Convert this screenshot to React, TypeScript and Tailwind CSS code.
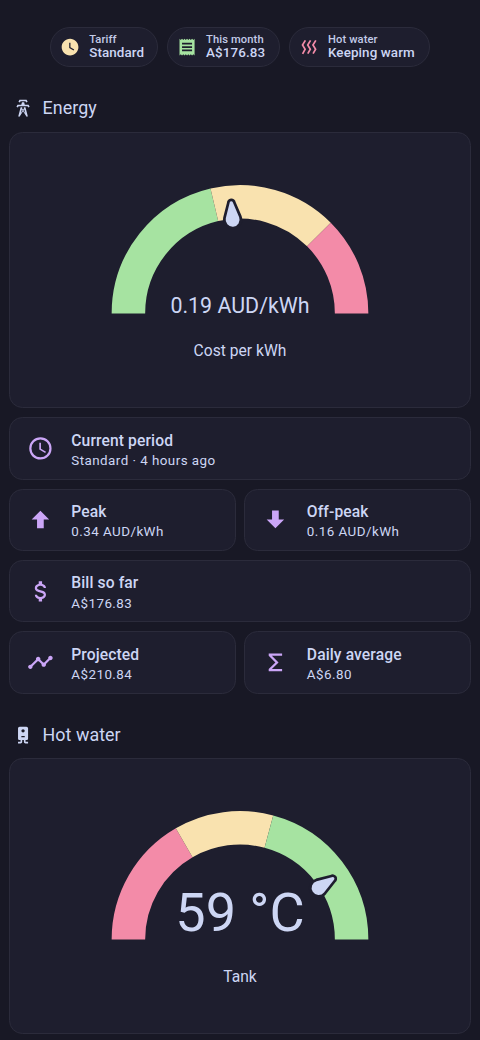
import type { ReactNode } from "react";

const ICONS = {
  clock:
    "M12 2C6.5 2 2 6.5 2 12C2 17.5 6.5 22 12 22C17.5 22 22 17.5 22 12S17.5 2 12 2M16.2 16.2L11 13V7H12.5V12.2L17 14.9L16.2 16.2Z",
  clockOutline:
    "M12,20A8,8 0 0,0 20,12A8,8 0 0,0 12,4A8,8 0 0,0 4,12A8,8 0 0,0 12,20M12,2A10,10 0 0,1 22,12A10,10 0 0,1 12,22C6.47,22 2,17.5 2,12A10,10 0 0,1 12,2M12.5,7V12.25L17,14.92L16.25,16.15L11,13V7H12.5Z",
  receipt:
    "M3,22L4.5,20.5L6,22L7.5,20.5L9,22L10.5,20.5L12,22L13.5,20.5L15,22L16.5,20.5L18,22L19.5,20.5L21,22V2L19.5,3.5L18,2L16.5,3.5L15,2L13.5,3.5L12,2L10.5,3.5L9,2L7.5,3.5L6,2L4.5,3.5L3,2M18,9H6V7H18M18,13H6V11H18M18,17H6V15H18V17Z",
  heat:
    "M8.5 4.5L5.4 9.5L8.5 14.7L5.2 20.5L3.4 19.6L6.1 14.7L3 9.5L6.7 3.6L8.5 4.5M14.7 4.4L11.6 9.5L14.7 14.5L11.4 20.3L9.6 19.4L12.3 14.5L9.2 9.5L12.9 3.5L14.7 4.4M21 4.4L17.9 9.5L21 14.5L17.7 20.3L15.9 19.4L18.6 14.5L15.5 9.5L19.2 3.5L21 4.4",
  tower:
    "M8.28,5.45L6.5,4.55L7.76,2H16.23L17.5,4.55L15.72,5.44L15,4H9L8.28,5.45M18.62,8H14.09L13.3,5H10.7L9.91,8H5.38L4.1,10.55L5.89,11.44L6.62,10H17.38L18.1,11.45L19.89,10.56L18.62,8M17.77,22H15.7L15.46,21.1L12,15.9L8.53,21.1L8.3,22H6.23L9.12,11H11.19L10.83,12.35L12,14.1L13.16,12.35L12.81,11H14.88L17.77,22M11.4,15L10.5,13.65L9.32,18.13L11.4,15M14.68,18.12L13.5,13.64L12.6,15L14.68,18.12Z",
  boiler:
    "M8 2C6.89 2 6 2.89 6 4V16C6 17.11 6.89 18 8 18H9V20H6V22H9C10.11 22 11 21.11 11 20V18H13V20C13 21.11 13.89 22 15 22H18V20H15V18H16C17.11 18 18 17.11 18 16V4C18 2.89 17.11 2 16 2H8M12 4.97A2 2 0 0 1 14 6.97A2 2 0 0 1 12 8.97A2 2 0 0 1 10 6.97A2 2 0 0 1 12 4.97M10 14.5V13H14V14.5H10Z",
  up: "M15,20H9V12H4.16L12,4.16L19.84,12H15V20Z",
  down: "M9,4H15V12H19.84L12,19.84L4.16,12H9V4Z",
  dollar:
    "M7,15H9C9,16.08 10.37,17 12,17C13.63,17 15,16.08 15,15C15,13.9 13.96,13.5 11.76,12.97C9.64,12.44 7,11.78 7,9C7,7.21 8.47,5.69 10.5,5.18V3H13.5V5.18C15.53,5.69 17,7.21 17,9H15C15,7.92 13.63,7 12,7C10.37,7 9,7.92 9,9C9,10.1 10.04,10.5 12.24,11.03C14.36,11.56 17,12.22 17,15C17,16.79 15.53,18.31 13.5,18.82V21H10.5V18.82C8.47,18.31 7,16.79 7,15Z",
  timeline:
    "M23,8C23,9.1 22.1,10 21,10C20.82,10 20.65,9.97 20.49,9.93L16.93,13.48C16.97,13.64 17,13.82 17,14C17,15.1 16.1,16 15,16C13.9,16 13,15.1 13,14C13,13.82 13.03,13.64 13.07,13.48L10.52,10.93C10.36,10.97 10.18,11 10,11C9.82,11 9.64,10.97 9.48,10.93L4.93,15.49C4.97,15.65 5,15.82 5,16C5,17.1 4.1,18 3,18C1.9,18 1,17.1 1,16C1,14.9 1.9,14 3,14C3.18,14 3.35,14.03 3.51,14.07L8.07,9.52C8.03,9.36 8,9.18 8,9C8,7.9 8.9,7 10,7C11.1,7 12,7.9 12,9C12,9.18 11.97,9.36 11.93,9.52L14.48,12.07C14.64,12.03 14.82,12 15,12C15.18,12 15.36,12.03 15.52,12.07L19.07,8.51C19.03,8.35 19,8.18 19,8C19,6.9 19.9,6 21,6C22.1,6 23,6.9 23,8Z",
  sigma: "M18,6H8.83L14.83,12L8.83,18H18V20H6V18L12,12L6,6V4H18V6Z",
};

type IconName = keyof typeof ICONS;

function Icon({ name, className }: { name: IconName; className: string }) {
  return (
    <svg viewBox="0 0 24 24" className={`shrink-0 fill-current ${className}`}>
      <path d={ICONS[name]} fillRule={name === "boiler" ? "evenodd" : "nonzero"} />
    </svg>
  );
}

function Badge({
  icon,
  color,
  width,
  label,
  value,
}: {
  icon: IconName;
  color: string;
  width: string;
  label: string;
  value: string;
}) {
  return (
    <div
      className={`flex h-[40.2px] items-center gap-[8.8px] rounded-full border border-[#2b2b3b] bg-[#1e1e2e] pl-[9.2px] ${width}`}
    >
      <Icon name={icon} className={`size-[20.1px] ${color}`} />
      <div className="flex flex-col whitespace-nowrap font-medium">
        <span className="pt-px text-[11.16px] leading-[11.16px] tracking-[0.11px] text-[#c3cbe8]">{label}</span>
        <span className="text-[13.4px] leading-[16.5px] tracking-[0.11px]">{value}</span>
      </div>
    </div>
  );
}

function Heading({ icon, children }: { icon: IconName; children: ReactNode }) {
  return (
    <h2 className="flex h-[27px] items-center gap-[9.2px] pl-[4.4px] text-[17.86px]">
      <Icon name={icon} className="size-[20.1px]" />
      <span className="tracking-[0.05px]">{children}</span>
    </h2>
  );
}

function Tile({ icon, title, detail }: { icon: IconName; title: string; detail: string }) {
  return (
    <div className="flex h-[62.5px] w-full min-w-0 items-center gap-[17.6px] rounded-[13.4px] border border-[#2b2b3b] bg-[#1e1e2e] pl-[17px]">
      <Icon name={icon} className="size-[26.8px] text-[#cba6f7]" />
      <div className="flex flex-col pt-[3.4px] whitespace-nowrap">
        <span className="text-[15.63px] leading-[22.3px] font-medium tracking-[0.11px]">{title}</span>
        <span className="text-[13.4px] leading-[18.6px] tracking-[0.45px]">{detail}</span>
      </div>
    </div>
  );
}

const CX = 129;
const CY = 129.4;
const R = 111.6;

// Angles run clockwise in degrees from the left end of the dial.
function arc(from: number, to: number) {
  const point = (deg: number) => {
    const a = (deg * Math.PI) / 180;
    return `${CX - R * Math.cos(a)} ${CY - R * Math.sin(a)}`;
  };
  return `M ${point(from)} A ${R} ${R} 0 0 1 ${point(to)}`;
}

function Gauge({
  segments,
  angle,
  value,
  valueClass,
  valueY,
  name,
}: {
  segments: { from: number; to: number; color: string }[];
  angle: number;
  value: string;
  valueClass: string;
  valueY: number;
  name: string;
}) {
  return (
    <section className="flex h-[276.4px] flex-col items-center rounded-[13.4px] border border-[#2b2b3b] bg-[#1e1e2e] pt-[51.1px]">
      <svg viewBox="0 0 258 134" className="h-[134px] w-[258px] shrink-0">
        {segments.map((s) => (
          <path key={s.from} d={arc(s.from, s.to)} fill="none" stroke={s.color} strokeWidth="33.5" />
        ))}
        <path
          d="M 33 -6.7 L 18.2 -1.7 A 1.7 1.7 0 0 0 18.2 1.7 L 33 6.7 A 7 7 0 1 0 33 -6.7 Z"
          transform={`rotate(${angle} ${CX} ${CY}) translate(0 ${CY})`}
          fill="#cdd6f4"
          stroke="#1e1e2e"
          strokeWidth="5.4"
          strokeLinejoin="round"
          paintOrder="stroke"
        />
        <text x={CX} y={valueY} textAnchor="middle" className={`fill-[#cdd6f4] ${valueClass}`}>
          {value}
        </text>
      </svg>
      <div className="mt-[21.2px] text-[15.63px] leading-6">{name}</div>
    </section>
  );
}

const GREEN = "#a6e3a1";
const YELLOW = "#f9e2af";
const RED = "#f38ba8";

export default function App() {
  return (
    <main className="h-[1040px] w-[480px] overflow-hidden bg-[#181825] px-[8.9px] pt-[26.8px] font-[Roboto,sans-serif] text-[#cdd6f4]">
      <div className="flex justify-center gap-[8.9px]">
        <Badge icon="clock" color="text-[#f9e2af]" width="w-[108px]" label="Tariff" value="Standard" />
        <Badge icon="receipt" color="text-[#a6e3a1]" width="w-[113px]" label="This month" value="A$176.83" />
        <Badge icon="heat" color="text-[#f38ba8]" width="w-[141px]" label="Hot water" value="Keeping warm" />
      </div>

      <div className="mt-[27.5px]">
        <Heading icon="tower">Energy</Heading>
      </div>
      <div className="mt-[10.3px] flex flex-col gap-[8.93px]">
        <Gauge
          segments={[
            { from: 0, to: 76.7, color: GREEN },
            { from: 76.7, to: 135, color: YELLOW },
            { from: 135, to: 180, color: RED },
          ]}
          angle={85.5}
          value="0.19 AUD/kWh"
          valueClass="text-[21.4px]"
          valueY={129}
          name="Cost per kWh"
        />
        <Tile icon="clockOutline" title="Current period" detail="Standard · 4 hours ago" />
        <div className="flex gap-[8.93px]">
          <Tile icon="up" title="Peak" detail="0.34 AUD/kWh" />
          <Tile icon="down" title="Off-peak" detail="0.16 AUD/kWh" />
        </div>
        <Tile icon="dollar" title="Bill so far" detail="A$176.83" />
        <div className="flex gap-[8.93px]">
          <Tile icon="timeline" title="Projected" detail="A$210.84" />
          <Tile icon="sigma" title="Daily average" detail="A$6.80" />
        </div>
      </div>

      <div className="mt-[27.6px]">
        <Heading icon="boiler">Hot water</Heading>
      </div>
      <div className="mt-[9.6px]">
        <Gauge
          segments={[
            { from: 0, to: 60, color: RED },
            { from: 60, to: 105, color: YELLOW },
            { from: 105, to: 180, color: GREEN },
          ]}
          angle={146.8}
          value="59 °C"
          valueClass="text-[54px]"
          valueY={121}
          name="Tank"
        />
      </div>
    </main>
  );
}
